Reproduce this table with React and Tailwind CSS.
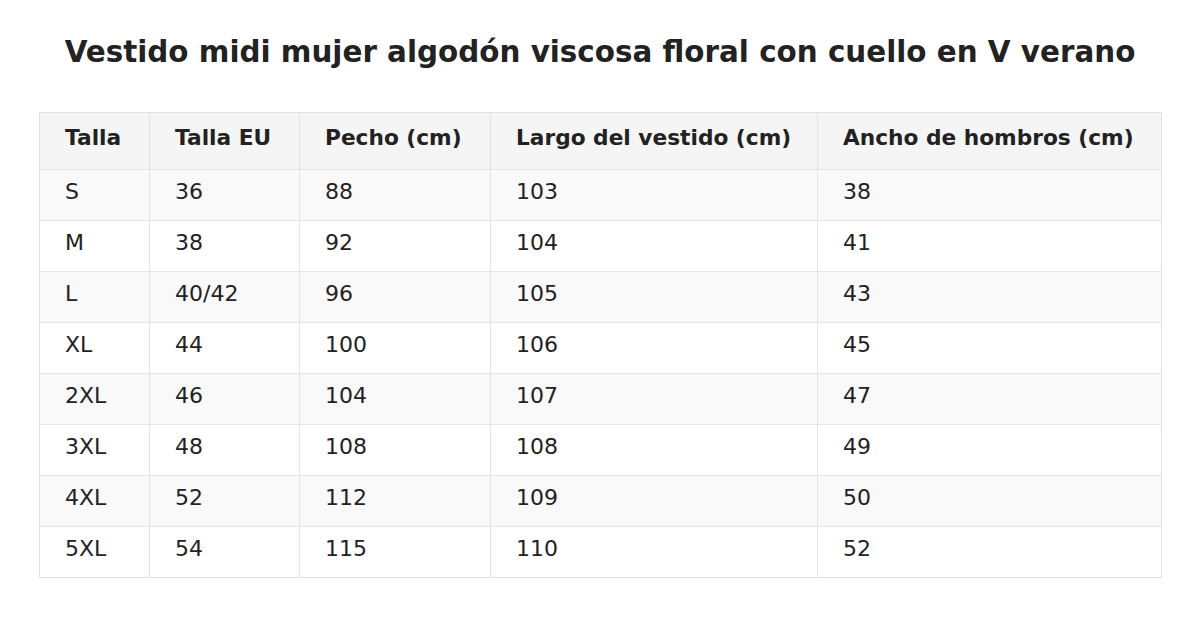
export default function App() {
  const rows = [
    ["S", "36", "88", "103", "38"],
    ["M", "38", "92", "104", "41"],
    ["L", "40/42", "96", "105", "43"],
    ["XL", "44", "100", "106", "45"],
    ["2XL", "46", "104", "107", "47"],
    ["3XL", "48", "108", "108", "49"],
    ["4XL", "52", "112", "109", "50"],
    ["5XL", "54", "115", "110", "52"],
  ];
  const heads = ["Talla", "Talla EU", "Pecho (cm)", "Largo del vestido (cm)", "Ancho de hombros (cm)"];
  const widths = ["w-[110px]", "w-[150px]", "w-[191px]", "w-[327px]", "w-[344px]"];
  return (
    <div className="w-[1200px] h-[617px] bg-white text-[#222] font-['DejaVu_Sans',sans-serif]">
      <h1 className="text-center font-bold text-[29.4px] leading-[36px] pt-[34px] h-[112px]">
        Vestido midi mujer algodón viscosa floral con cuello en V verano
      </h1>
      <table className="ml-[39px] w-[1122px] border-collapse table-fixed">
        <colgroup>
          {widths.map((w, i) => (
            <col key={i} className={w} />
          ))}
        </colgroup>
        <thead>
          <tr className="bg-[#f5f5f5] h-[57px]">
            {heads.map((h, i) => (
              <th key={i} className="border border-[#e3e3e3] text-left font-bold text-[21.7px] leading-[24px] pl-[25px] pb-[7px] align-middle">
                {h}
              </th>
            ))}
          </tr>
        </thead>
        <tbody>
          {rows.map((r, ri) => (
            <tr key={ri} className={`h-[51px] ${ri % 2 === 0 ? "bg-[#f9f9f9]" : "bg-white"}`}>
              {r.map((c, ci) => (
                <td key={ci} className="border border-[#e3e3e3] text-[22px] leading-[24px] pl-[25px] pb-[7px] align-middle">
                  {c}
                </td>
              ))}
            </tr>
          ))}
        </tbody>
      </table>
    </div>
  );
}
